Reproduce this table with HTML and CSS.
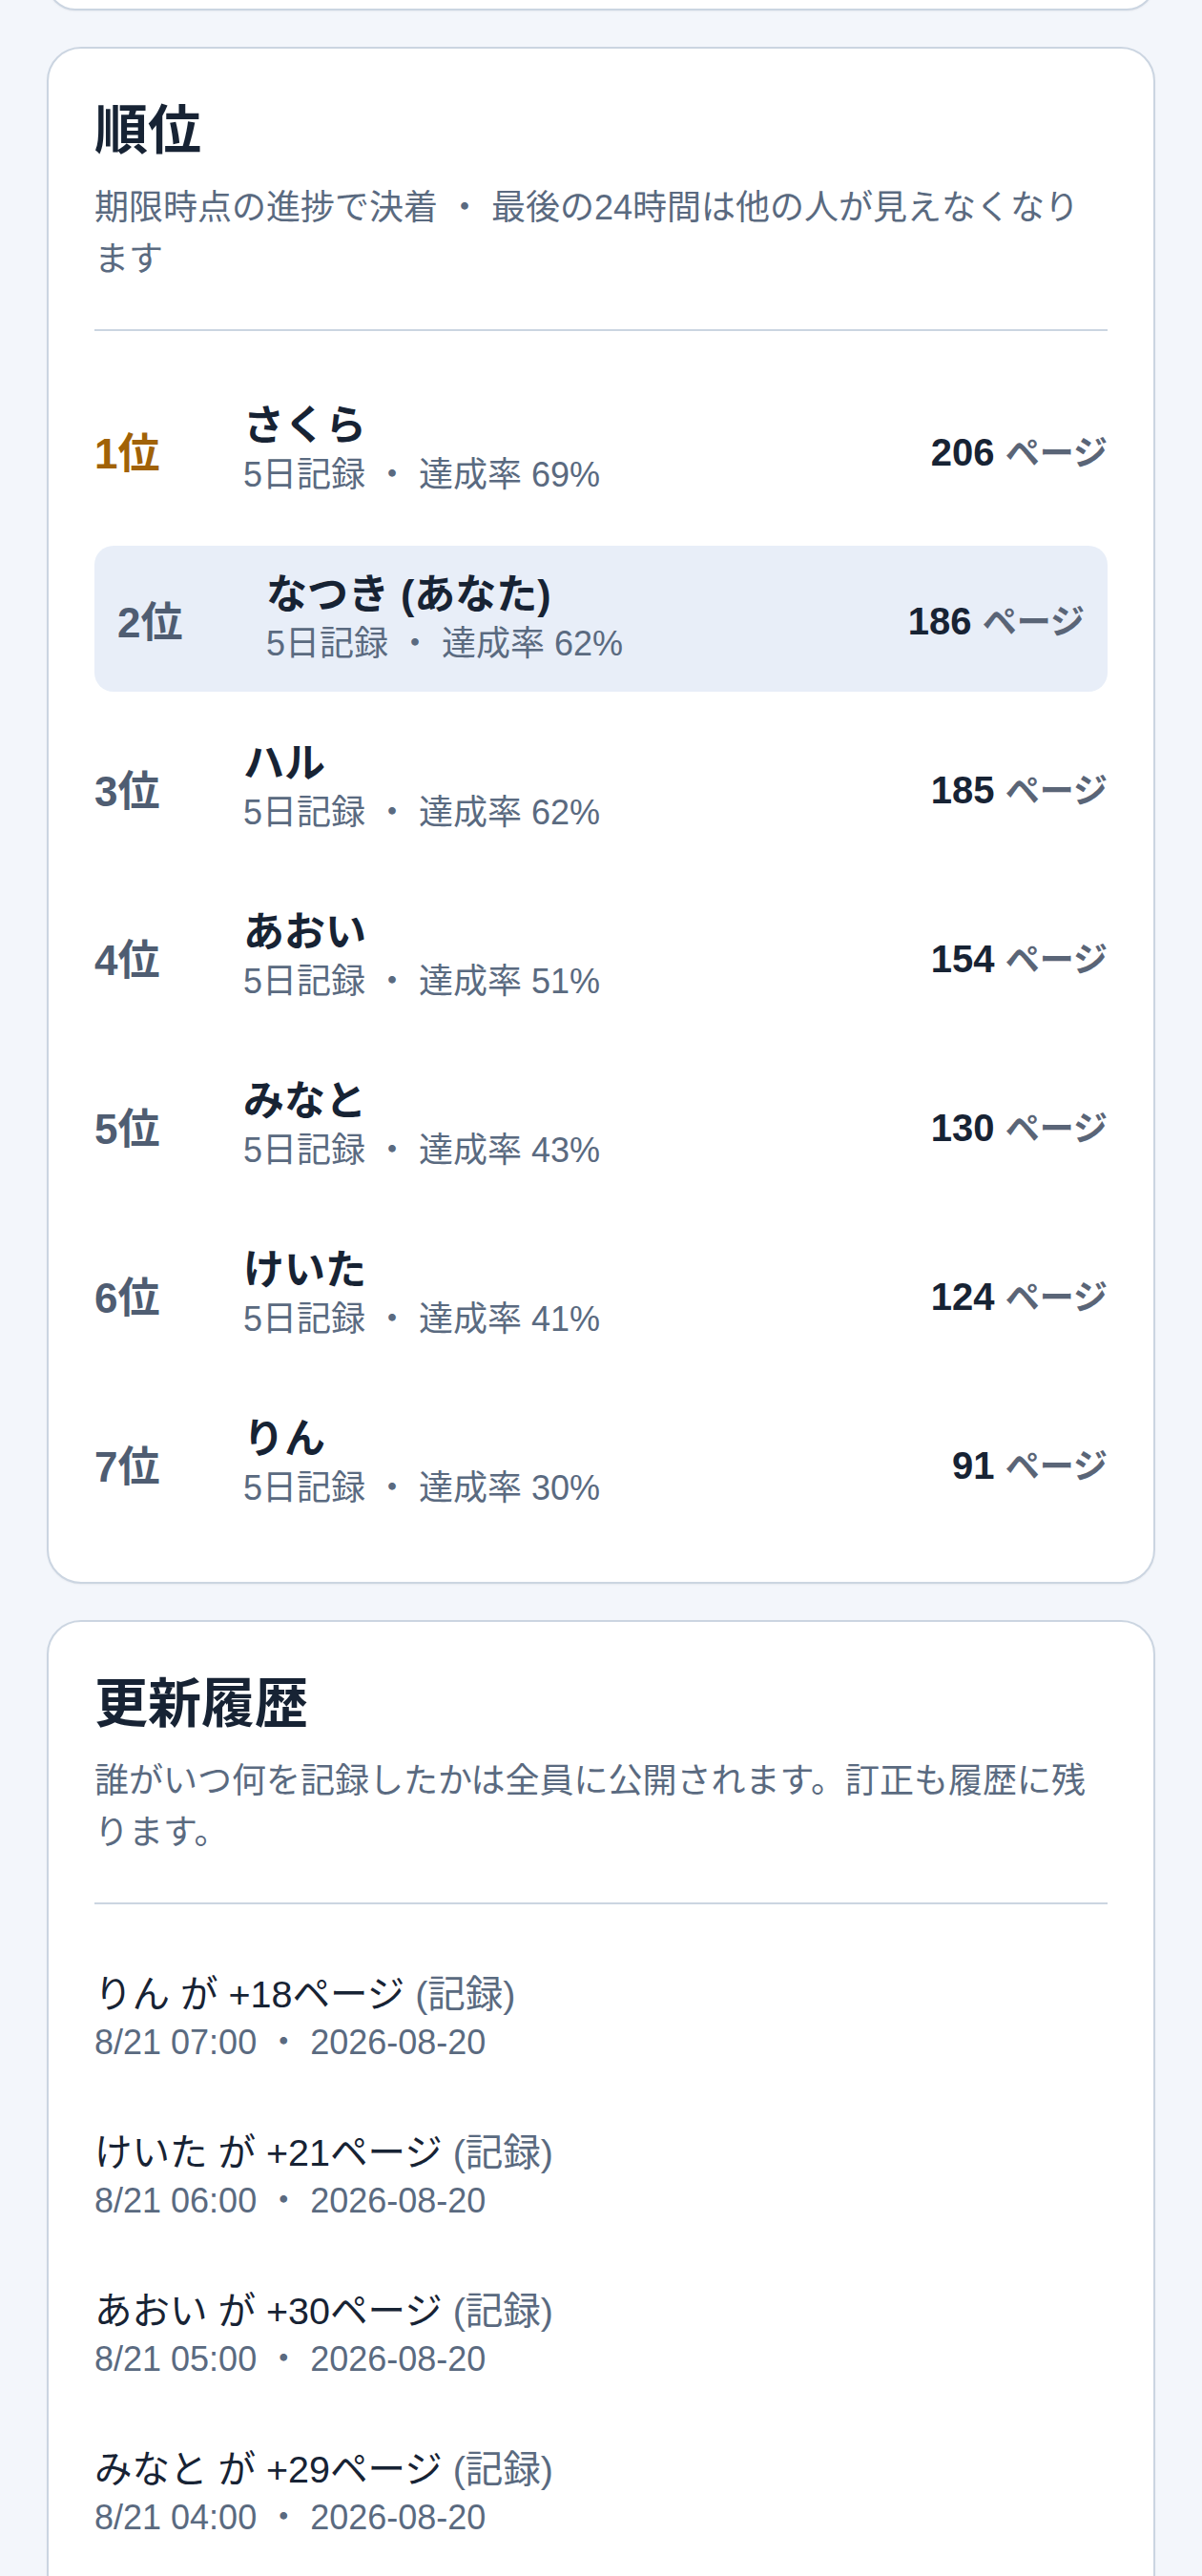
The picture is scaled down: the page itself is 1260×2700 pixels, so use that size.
FILE: index.html
```html
<!DOCTYPE html>
<html lang="ja">
    <head>
        <meta charset="utf-8">
        <title>順位</title>
        <link rel="stylesheet" href="styles.css">
    </head>
    <body>
        <main class="page">
            <!-- previous card, scrolled out of view -->
            <section class="card card-prev"></section>

            <section class="card">
                <header class="card-head">
                    <h2 class="card-title">順位</h2>
                    <p class="card-desc">期限時点の進捗で決着 ・ 最後の24時間は他の人が見えなくなります</p>
                </header>
                <ol class="ranking">
                    <li class="rank-row">
                        <span class="rank rank-first">1位</span>
                        <div class="who">
                            <div class="name">さくら</div>
                            <div class="meta">5日記録 ・ 達成率 69%</div>
                        </div>
                        <div class="pages"><b>206</b> <span>ページ</span></div>
                    </li>
                    <li class="rank-row me">
                        <span class="rank">2位</span>
                        <div class="who">
                            <div class="name">なつき (あなた)</div>
                            <div class="meta">5日記録 ・ 達成率 62%</div>
                        </div>
                        <div class="pages"><b>186</b> <span>ページ</span></div>
                    </li>
                    <li class="rank-row">
                        <span class="rank">3位</span>
                        <div class="who">
                            <div class="name">ハル</div>
                            <div class="meta">5日記録 ・ 達成率 62%</div>
                        </div>
                        <div class="pages"><b>185</b> <span>ページ</span></div>
                    </li>
                    <li class="rank-row">
                        <span class="rank">4位</span>
                        <div class="who">
                            <div class="name">あおい</div>
                            <div class="meta">5日記録 ・ 達成率 51%</div>
                        </div>
                        <div class="pages"><b>154</b> <span>ページ</span></div>
                    </li>
                    <li class="rank-row">
                        <span class="rank">5位</span>
                        <div class="who">
                            <div class="name">みなと</div>
                            <div class="meta">5日記録 ・ 達成率 43%</div>
                        </div>
                        <div class="pages"><b>130</b> <span>ページ</span></div>
                    </li>
                    <li class="rank-row">
                        <span class="rank">6位</span>
                        <div class="who">
                            <div class="name">けいた</div>
                            <div class="meta">5日記録 ・ 達成率 41%</div>
                        </div>
                        <div class="pages"><b>124</b> <span>ページ</span></div>
                    </li>
                    <li class="rank-row">
                        <span class="rank">7位</span>
                        <div class="who">
                            <div class="name">りん</div>
                            <div class="meta">5日記録 ・ 達成率 30%</div>
                        </div>
                        <div class="pages"><b>91</b> <span>ページ</span></div>
                    </li>
                </ol>
            </section>

            <section class="card">
                <header class="card-head">
                    <h2 class="card-title">更新履歴</h2>
                    <p class="card-desc">誰がいつ何を記録したかは全員に公開されます。訂正も履歴に残ります。</p>
                </header>
                <ul class="history">
                    <li class="log">
                        <div class="log-text">りん が +18ページ <span class="log-kind">(記録)</span></div>
                        <div class="meta">8/21 07:00 ・ 2026-08-20</div>
                    </li>
                    <li class="log">
                        <div class="log-text">けいた が +21ページ <span class="log-kind">(記録)</span></div>
                        <div class="meta">8/21 06:00 ・ 2026-08-20</div>
                    </li>
                    <li class="log">
                        <div class="log-text">あおい が +30ページ <span class="log-kind">(記録)</span></div>
                        <div class="meta">8/21 05:00 ・ 2026-08-20</div>
                    </li>
                    <li class="log">
                        <div class="log-text">みなと が +29ページ <span class="log-kind">(記録)</span></div>
                        <div class="meta">8/21 04:00 ・ 2026-08-20</div>
                    </li>
                    <li class="log">
                        <div class="log-text">ハル が +24ページ <span class="log-kind">(記録)</span></div>
                        <div class="meta">8/21 03:00 ・ 2026-08-20</div>
                    </li>
                </ul>
            </section>
        </main>
    </body>
</html>
```

FILE: styles.css
```css
* {
    box-sizing: border-box;
}

body {
    margin: 0;
    background: #f3f6fb;
    font-family: "Liberation Sans", "Noto Sans CJK JP", sans-serif;
    color: #172334;
}

.page {
    display: flex;
    flex-direction: column;
    gap: 38px;
    padding: 0 49px;
}

/* cards */
.card {
    background: #fff;
    border: 2px solid #cbd5e1;
    border-radius: 36px;
    padding: 48px;
    box-shadow: 0 1px 2px rgba(15, 23, 42, 0.05);
}

.card-prev {
    height: 60px;
    padding: 0;
    margin-top: -49px; /* only its bottom edge is on screen */
}

.card-head {
    padding-bottom: 46px;
    border-bottom: 2px solid #cbd5e1;
}

.card-title {
    margin: 0;
    font-size: 56px;
    font-weight: 700;
    line-height: 76px;
}

.card-desc {
    margin: 16px 0 0;
    font-size: 36px;
    line-height: 54px;
    color: #5a6a80;
}

.meta {
    font-size: 36px;
    line-height: 51px;
    color: #5a6a80;
}

/* ranking list */
.ranking {
    list-style: none;
    margin: 48px 0 0;
    padding: 0;
    display: flex;
    flex-direction: column;
    gap: 24px;
}

.rank-row {
    display: grid;
    grid-template-columns: 156px 1fr auto;
    align-items: center;
    padding: 25px 0;
    border-radius: 20px;
}

.rank-row.me {
    background: #e8eef8;
    padding: 25px 24px;
}

.rank {
    font-size: 44px;
    font-weight: 700;
    color: #4f5d72;
}

.rank-first {
    color: #a16207;
}

.name {
    font-size: 43px;
    font-weight: 700;
    line-height: 52px;
}

.pages {
    font-size: 40px;
    font-weight: 700;
}

.pages span {
    font-size: 36px;
    color: #5a6577;
}

/* history */
.history {
    list-style: none;
    margin: 48px 0 0;
    padding: 0;
    display: flex;
    flex-direction: column;
    gap: 24px;
}

.log {
    padding: 20px 0;
}

.log-text {
    font-size: 39.5px;
    line-height: 52px;
}

.log-kind {
    color: #5a6a80;
}

.log .meta {
    line-height: 50px;
}
```
